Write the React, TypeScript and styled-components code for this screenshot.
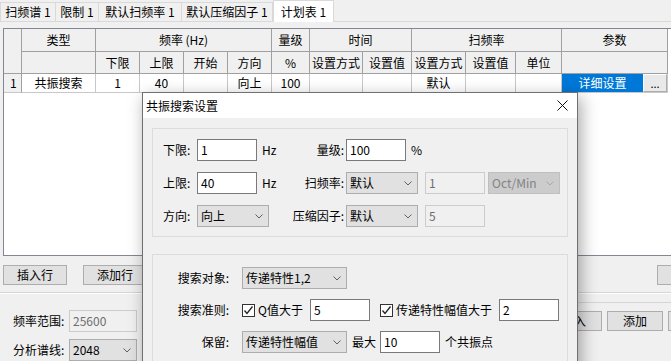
import React from 'react';
import styled, { createGlobalStyle } from 'styled-components';

const GlobalStyle = createGlobalStyle`
  html, body {
    margin: 0;
    padding: 0;
  }
  body {
    font-family: "Noto Sans CJK SC", "Liberation Sans", sans-serif;
    font-size: 12px;
    line-height: 16px;
    color: #000;
    background: #f0f0f0;
  }
`;

const GRID_COLS = [18, 74, 44, 44, 44, 44, 38, 53, 49, 54, 50, 46, 106];

const Chevron: React.FC<{ color?: string }> = ({ color = '#606060' }) => (
  <svg width="8" height="5" viewBox="0 0 8 5">
    <path d="M0.5 0.5 L4 4 L7.5 0.5" fill="none" stroke={color} strokeWidth="1" />
  </svg>
);

const CheckMark: React.FC = () => (
  <CheckBox>
    <svg width="11" height="11" viewBox="0 0 11 11">
      <path d="M1.5 5.5 L4 8.5 L9.5 1.5" fill="none" stroke="#222" strokeWidth="1.3" />
    </svg>
  </CheckBox>
);

const ComboBox: React.FC<{ w: number; value: string; disabled?: boolean }> = ({ w, value, disabled }) => (
  <Combo $w={w} $disabled={disabled}>
    <span>{value}</span>
    <Chevron color={disabled ? '#a8a8a8' : '#606060'} />
  </Combo>
);

const App: React.FC = () => {
  return (
    <>
      <GlobalStyle />
      <Page>
        <TabStrip>
          <Tab $w={56}>扫频谱 1</Tab>
          <Tab $w={43}>限制 1</Tab>
          <Tab $w={83}>默认扫频率 1</Tab>
          <Tab $w={91}>默认压缩因子 1</Tab>
          <Tab $w={61} $active>计划表 1</Tab>
        </TabStrip>

        <TabPage>
          <GridFrame>
            <PlanGrid>
              <HeadCell $rows={2} />
              <HeadCell>类型</HeadCell>
              <HeadCell $span={4}>频率 (Hz)</HeadCell>
              <HeadCell>量级</HeadCell>
              <HeadCell $span={2}>时间</HeadCell>
              <HeadCell $span={3}>扫频率</HeadCell>
              <HeadCell>参数</HeadCell>

              <HeadCell />
              <HeadCell>下限</HeadCell>
              <HeadCell>上限</HeadCell>
              <HeadCell>开始</HeadCell>
              <HeadCell>方向</HeadCell>
              <HeadCell>%</HeadCell>
              <HeadCell>设置方式</HeadCell>
              <HeadCell>设置值</HeadCell>
              <HeadCell>设置方式</HeadCell>
              <HeadCell>设置值</HeadCell>
              <HeadCell>单位</HeadCell>
              <HeadCell />

              <RowHead>1</RowHead>
              <Cell>共振搜索</Cell>
              <Cell>1</Cell>
              <Cell>40</Cell>
              <Cell />
              <Cell>向上</Cell>
              <Cell>100</Cell>
              <Cell />
              <Cell />
              <Cell>默认</Cell>
              <Cell />
              <Cell />
              <ParamCell>
                <SelectedValue>详细设置</SelectedValue>
                <DotsButton>...</DotsButton>
              </ParamCell>
            </PlanGrid>
          </GridFrame>

          <ButtonRow>
            <Button $w={64}>插入行</Button>
            <Button $w={64} $ml={16}>添加行</Button>
            <Button $w={64} $ml={510}>插入</Button>
          </ButtonRow>
        </TabPage>

        <Separator />

        <BottomArea>
          <SpectrumForm>
            <FormRow>
              <FormLabel>频率范围:</FormLabel>
              <TextBox $w={68} disabled defaultValue="25600" />
            </FormRow>
            <FormRow>
              <FormLabel>分析谱线:</FormLabel>
              <ComboBox w={68} value="2048" />
            </FormRow>
          </SpectrumForm>
          <ActionPane>
            <Button $w={56}>插入</Button>
            <Button $w={56} $ml={5}>添加</Button>
            <Button $w={56} $ml={5}>删除</Button>
          </ActionPane>
        </BottomArea>

        <Dialog>
          <TitleBar>
            <TitleText>共振搜索设置</TitleText>
            <svg width="11" height="11" viewBox="0 0 11 11">
              <path d="M0.5 0.5 L10.5 10.5 M10.5 0.5 L0.5 10.5" stroke="#111" strokeWidth="1" />
            </svg>
          </TitleBar>

          <DialogBody>
            <GroupBox $h={109} $pt={10}>
              <ParamGrid>
                <FieldLabel>下限:</FieldLabel>
                <ControlCell>
                  <TextBox $w={60} defaultValue="1" />
                  <Unit>Hz</Unit>
                </ControlCell>
                <FieldLabel $right>量级:</FieldLabel>
                <ControlCell>
                  <TextBox $w={60} defaultValue="100" />
                  <Unit>%</Unit>
                </ControlCell>
                <span />
                <span />

                <FieldLabel>上限:</FieldLabel>
                <ControlCell>
                  <TextBox $w={60} defaultValue="40" />
                  <Unit>Hz</Unit>
                </ControlCell>
                <FieldLabel $right>扫频率:</FieldLabel>
                <ControlCell>
                  <ComboBox w={72} value="默认" />
                </ControlCell>
                <ControlCell>
                  <TextBox $w={60} disabled defaultValue="1" />
                </ControlCell>
                <ControlCell>
                  <ComboBox w={72} value="Oct/Min" disabled />
                </ControlCell>

                <FieldLabel>方向:</FieldLabel>
                <ControlCell>
                  <ComboBox w={72} value="向上" />
                </ControlCell>
                <FieldLabel $right>压缩因子:</FieldLabel>
                <ControlCell>
                  <ComboBox w={72} value="默认" />
                </ControlCell>
                <ControlCell>
                  <TextBox $w={60} disabled defaultValue="5" />
                </ControlCell>
                <span />
              </ParamGrid>
            </GroupBox>

            <GroupBox $h={130} $pt={12} $mt={17}>
              <SearchGrid>
                <SearchLabel>搜索对象:</SearchLabel>
                <SearchRow>
                  <ComboBox w={105} value="传递特性1,2" />
                </SearchRow>

                <SearchLabel>搜索准则:</SearchLabel>
                <SearchRow>
                  <CheckMark />
                  <CheckText $w={52}>Q值大于</CheckText>
                  <TextBox $w={60} defaultValue="5" />
                  <CheckGap />
                  <CheckMark />
                  <CheckText $w={103}>传递特性幅值大于</CheckText>
                  <TextBox $w={60} defaultValue="2" />
                </SearchRow>

                <SearchLabel>保留:</SearchLabel>
                <SearchRow>
                  <ComboBox w={105} value="传递特性幅值" />
                  <InlineText $w={33}>最大</InlineText>
                  <TextBox $w={60} defaultValue="10" />
                  <InlineText $w={60}>个共振点</InlineText>
                </SearchRow>
              </SearchGrid>
            </GroupBox>
          </DialogBody>
        </Dialog>
      </Page>
    </>
  );
};

// Styled Components
const Page = styled.div`
  position: relative;
  width: 671px;
  height: 361px;
  overflow: hidden;
  background: #f0f0f0;
`;

const TabStrip = styled.div`
  display: flex;
  align-items: flex-end;
  height: 21px;
  border-bottom: 1px solid #d9d9d9;
`;

const Tab = styled.div<{ $w: number; $active?: boolean }>`
  box-sizing: border-box;
  flex: none;
  width: ${(p) => p.$w}px;
  height: ${(p) => (p.$active ? 22 : 19)}px;
  margin-bottom: ${(p) => (p.$active ? -1 : 0)}px;
  display: flex;
  align-items: center;
  justify-content: center;
  white-space: nowrap;
  background: ${(p) => (p.$active ? '#ffffff' : '#f0f0f0')};
  border-top: 1px solid #d9d9d9;
  border-right: 1px solid #d9d9d9;
  border-left: ${(p) => (p.$active ? '1px solid #d9d9d9' : 'none')};
  position: relative;
  z-index: ${(p) => (p.$active ? 1 : 0)};

  &:first-child {
    border-left: 1px solid #d9d9d9;
  }
`;

const TabPage = styled.div`
  padding: 6px 0 0 3px;
`;

const GridFrame = styled.div`
  box-sizing: border-box;
  width: 672px;
  height: 228px;
  border: 1px solid #828790;
  background: #ffffff;
`;

const PlanGrid = styled.div`
  display: grid;
  grid-template-columns: ${GRID_COLS.map((c) => `${c}px`).join(' ')};
  grid-template-rows: 23px 22px 19px;
`;

const HeadCell = styled.div<{ $span?: number; $rows?: number }>`
  grid-column: span ${(p) => p.$span ?? 1};
  grid-row: span ${(p) => p.$rows ?? 1};
  box-sizing: border-box;
  display: flex;
  align-items: center;
  justify-content: center;
  white-space: nowrap;
  background: #f0f0f0;
  border-right: 1px solid #a0a0a0;
  border-bottom: 1px solid #a0a0a0;
`;

const RowHead = styled.div`
  box-sizing: border-box;
  display: flex;
  align-items: center;
  padding-left: 6px;
  background: #f0f0f0;
  border-right: 1px solid #a0a0a0;
  border-bottom: 1px solid #c8c8c8;
`;

const Cell = styled.div`
  box-sizing: border-box;
  display: flex;
  align-items: center;
  justify-content: center;
  white-space: nowrap;
  background: #ffffff;
  border-right: 1px solid #c8c8c8;
  border-bottom: 1px solid #c8c8c8;
`;

const ParamCell = styled.div`
  box-sizing: border-box;
  display: flex;
  border-right: 1px solid #c8c8c8;
  border-bottom: 1px solid #c8c8c8;
`;

const SelectedValue = styled.div`
  width: 81px;
  display: flex;
  align-items: center;
  justify-content: center;
  background: #0078d7;
  color: #ffffff;
`;

const DotsButton = styled.div`
  flex: 1;
  box-sizing: border-box;
  display: flex;
  align-items: center;
  justify-content: center;
  font-size: 11px;
  line-height: 8px;
  background: #e9e9e9;
  border: 1px solid #adadad;
  border-top-color: #ffffff;
  border-left-color: #ffffff;
`;

const ButtonRow = styled.div`
  display: flex;
  padding-top: 9px;
  width: 900px;
`;

const Button = styled.div<{ $w: number; $ml?: number }>`
  box-sizing: border-box;
  flex: none;
  width: ${(p) => p.$w}px;
  height: 20px;
  margin-left: ${(p) => p.$ml ?? 0}px;
  display: flex;
  align-items: center;
  justify-content: center;
  white-space: nowrap;
  background: #e1e1e1;
  border: 1px solid #adadad;
`;

const Separator = styled.div`
  margin-top: 7px;
  height: 1px;
  background: #d5d5d5;
  border-bottom: 1px solid #ffffff;
`;

const BottomArea = styled.div`
  display: flex;
  width: 900px;
`;

const SpectrumForm = styled.div`
  flex: none;
  width: 540px;
  padding: 16px 0 0 13px;
  box-sizing: border-box;
  display: flex;
  flex-direction: column;
  gap: 7px;
`;

const FormRow = styled.div`
  display: flex;
  align-items: center;
`;

const FormLabel = styled.div`
  width: 56px;
  white-space: nowrap;
`;

const ActionPane = styled.div`
  flex: none;
  display: flex;
  margin-top: 8px;
  padding: 8px 0 0 6px;
  border-top: 1px solid #d5d5d5;
`;

const Dialog = styled.div`
  position: absolute;
  left: 142px;
  top: 92px;
  width: 436px;
  height: 290px;
  box-sizing: border-box;
  border: 1px solid #707070;
  background: #f0f0f0;
  box-shadow: 3px 5px 16px rgba(0, 0, 0, 0.35);
`;

const TitleBar = styled.div`
  height: 25px;
  display: flex;
  align-items: center;
  justify-content: space-between;
  padding: 0 9px 0 3px;
  background: #ffffff;
`;

const TitleText = styled.div`
  white-space: nowrap;
`;

const DialogBody = styled.div`
  padding: 10px 9px 0 9px;
`;

const GroupBox = styled.div<{ $h: number; $pt: number; $mt?: number }>`
  box-sizing: border-box;
  height: ${(p) => p.$h}px;
  margin-top: ${(p) => p.$mt ?? 0}px;
  padding-top: ${(p) => p.$pt}px;
  border: 1px solid #dcdcdc;
`;

const ParamGrid = styled.div`
  display: grid;
  grid-template-columns: 34px 88px 61px 79px 63px 72px;
  grid-auto-rows: 22px;
  row-gap: 11px;
  padding-left: 10px;
`;

const FieldLabel = styled.div<{ $right?: boolean }>`
  display: flex;
  align-items: center;
  justify-content: ${(p) => (p.$right ? 'flex-end' : 'flex-start')};
  padding-right: ${(p) => (p.$right ? 2 : 0)}px;
  white-space: nowrap;
`;

const ControlCell = styled.div`
  display: flex;
  align-items: center;
  gap: 5px;
`;

const Unit = styled.span`
  white-space: nowrap;
  margin-top: -1px;
`;

const TextBox = styled.input.attrs({ readOnly: true })<{ $w: number }>`
  box-sizing: border-box;
  flex: none;
  width: ${(p) => p.$w}px;
  height: 22px;
  margin: 0;
  padding: 0 3px 2px;
  font: inherit;
  color: #000;
  background: #ffffff;
  border: 1px solid #7a7a7a;
  border-radius: 0;
  outline: none;

  &:disabled {
    color: #6d6d6d;
    background: #f0f0f0;
    border-color: #cccccc;
  }
`;

const Combo = styled.div<{ $w: number; $disabled?: boolean }>`
  box-sizing: border-box;
  flex: none;
  width: ${(p) => p.$w}px;
  height: 22px;
  display: flex;
  align-items: center;
  justify-content: space-between;
  padding: 0 5px 0 3px;
  white-space: nowrap;
  color: ${(p) => (p.$disabled ? '#838383' : '#000')};
  background: ${(p) => (p.$disabled ? '#cccccc' : '#e1e1e1')};
  border: 1px solid ${(p) => (p.$disabled ? '#bfbfbf' : '#adadad')};
`;

const SearchGrid = styled.div`
  display: grid;
  grid-template-columns: 89px 1fr;
  grid-auto-rows: 22px;
  row-gap: 10px;
`;

const SearchLabel = styled.div`
  display: flex;
  align-items: center;
  justify-content: flex-end;
  padding-right: 13px;
  white-space: nowrap;
`;

const SearchRow = styled.div`
  display: flex;
  align-items: center;
`;

const CheckBox = styled.div`
  box-sizing: border-box;
  flex: none;
  width: 13px;
  height: 13px;
  display: flex;
  align-items: center;
  justify-content: center;
  background: #ffffff;
  border: 1px solid #333333;
`;

const CheckText = styled.span<{ $w: number }>`
  flex: none;
  width: ${(p) => p.$w}px;
  margin-left: 3px;
  white-space: nowrap;
`;

const CheckGap = styled.span`
  width: 10px;
  flex: none;
`;

const InlineText = styled.span<{ $w: number }>`
  flex: none;
  width: ${(p) => p.$w}px;
  padding-left: 5px;
  box-sizing: border-box;
  white-space: nowrap;
`;

export default App;
